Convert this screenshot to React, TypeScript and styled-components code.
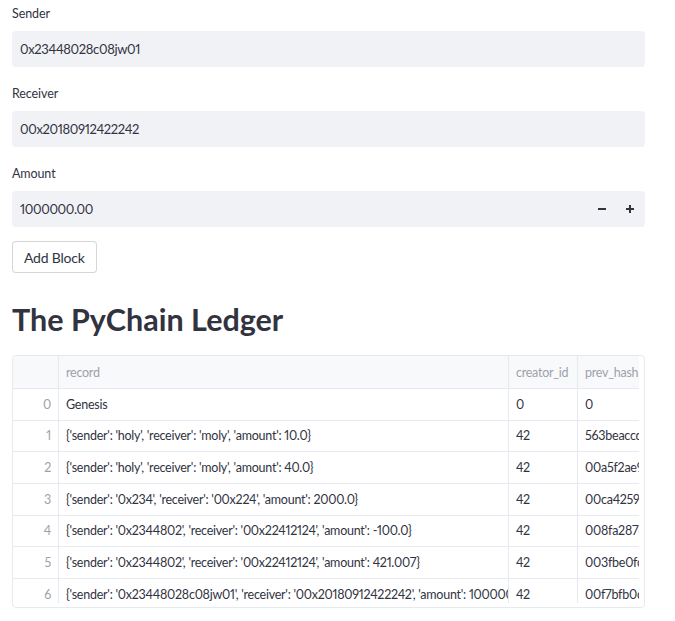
import React from "react";
import styled, { createGlobalStyle } from "styled-components";

const Global = createGlobalStyle`
  html, body { margin: 0; padding: 0; background: #ffffff; }
  body {
    font-family: Lato, "Open Sans", sans-serif;
    color: #31333f;
    -webkit-font-smoothing: antialiased;
    font-variant-numeric: proportional-nums;
  }
`;

const Page = styled.div`
  width: 633px;
  padding: 4px 0 0 12px;
  display: flex;
  flex-direction: column;
`;

const Field = styled.div`
  display: flex;
  flex-direction: column;
  margin-bottom: 17px;
`;

const Label = styled.label`
  font-size: 12.5px;
  letter-spacing: -0.1px;
  line-height: 20px;
  height: 20px;
  margin-bottom: 7px;
  color: #31333f;
`;

const InputBox = styled.div`
  height: 36px;
  background: #f0f2f6;
  border-radius: 4px;
  display: flex;
  align-items: center;
  padding: 0 1px 0 8px;
  font-size: 13px;
  letter-spacing: -0.35px;
  color: #31333f;
`;

const InputText = styled.span`
  flex: 1;
`;

const StepButton = styled.span`
  width: 28px;
  height: 36px;
  display: flex;
  align-items: center;
  justify-content: center;
  color: #31333f;
`;

const Button = styled.button`
  align-self: flex-start;
  height: 32px;
  padding: 0 11px;
  margin-top: -3px;
  border: 1px solid rgba(49, 51, 63, 0.2);
  border-radius: 4px;
  background: #ffffff;
  font-family: inherit;
  font-size: 14px;
  letter-spacing: -0.2px;
  color: #31333f;
`;

const Heading = styled.h1`
  margin: 26px 0 0 0;
  font-size: 30.5px;
  line-height: 40px;
  font-weight: 700;
  color: #31333f;
`;

const TableFrame = styled.div`
  margin-top: 16px;
  width: 633px;
  height: 253px;
  border: 1px solid #e6e9ef;
  border-radius: 4px;
  padding: 0 6px 5px 0;
  box-sizing: border-box;
`;

const Viewport = styled.div`
  width: 626px;
  height: 247px;
  overflow: hidden;
  border-top-left-radius: 4px;
`;

const Grid = styled.div`
  display: grid;
  grid-template-columns: 46px 450px 69px 120px;
  grid-template-rows: 33px;
  grid-auto-rows: 31.67px;
  width: 685px;
  font-size: 12.5px;
  letter-spacing: -0.25px;
`;

const HeadCell = styled.div`
  background: #f8f9fb;
  border-right: 1px solid #e6e9ef;
  border-bottom: 1px solid #e6e9ef;
  color: #9ea1a9;
  padding: 0 7px;
  display: flex;
  align-items: center;
  white-space: nowrap;
  overflow: hidden;
`;

const Cell = styled.div<{ $index?: boolean }>`
  border-right: 1px solid #e6e9ef;
  border-bottom: 1px solid #e6e9ef;
  color: ${(p) => (p.$index ? "#9ea1a9" : "#31333f")};
  padding: 0 7px;
  display: flex;
  align-items: center;
  justify-content: ${(p) => (p.$index ? "flex-end" : "flex-start")};
  white-space: nowrap;
  overflow: hidden;
`;

const Minus = () => (
  <svg width="8" height="8" viewBox="0 0 8 8">
    <rect x="0" y="3" width="8" height="2" fill="#31333f" />
  </svg>
);
const Plus = () => (
  <svg width="8" height="8" viewBox="0 0 8 8">
    <rect x="0" y="3" width="8" height="2" fill="#31333f" />
    <rect x="3" y="0" width="2" height="8" fill="#31333f" />
  </svg>
);

const rows: [string, string, string][] = [
  ["Genesis", "0", "0"],
  ["{'sender': 'holy', 'receiver': 'moly', 'amount': 10.0}", "42", "563beaccd1"],
  ["{'sender': 'holy', 'receiver': 'moly', 'amount': 40.0}", "42", "00a5f2ae9a"],
  ["{'sender': '0x234', 'receiver': '00x224', 'amount': 2000.0}", "42", "00ca4259e1"],
  ["{'sender': '0x2344802', 'receiver': '00x22412124', 'amount': -100.0}", "42", "008fa287d1"],
  ["{'sender': '0x2344802', 'receiver': '00x22412124', 'amount': 421.007}", "42", "003fbe0fce"],
  [
    "{'sender': '0x23448028c08jw01', 'receiver': '00x20180912422242', 'amount': 1000000.0}",
    "42",
    "00f7bfb0d5",
  ],
];

export default function App() {
  return (
    <>
      <Global />
      <Page>
        <Field>
          <Label>Sender</Label>
          <InputBox>
            <InputText>0x23448028c08jw01</InputText>
          </InputBox>
        </Field>
        <Field>
          <Label>Receiver</Label>
          <InputBox>
            <InputText>00x20180912422242</InputText>
          </InputBox>
        </Field>
        <Field>
          <Label>Amount</Label>
          <InputBox>
            <InputText>1000000.00</InputText>
            <StepButton>
              <Minus />
            </StepButton>
            <StepButton>
              <Plus />
            </StepButton>
          </InputBox>
        </Field>
        <Button>Add Block</Button>
        <Heading>The PyChain Ledger</Heading>
        <TableFrame>
          <Viewport>
            <Grid>
              <HeadCell />
              <HeadCell>record</HeadCell>
              <HeadCell>creator_id</HeadCell>
              <HeadCell>prev_hash</HeadCell>
              {rows.map((r, i) => (
                <React.Fragment key={i}>
                  <Cell $index>{i}</Cell>
                  <Cell>{r[0]}</Cell>
                  <Cell>{r[1]}</Cell>
                  <Cell>{r[2]}</Cell>
                </React.Fragment>
              ))}
            </Grid>
          </Viewport>
        </TableFrame>
      </Page>
    </>
  );
}
